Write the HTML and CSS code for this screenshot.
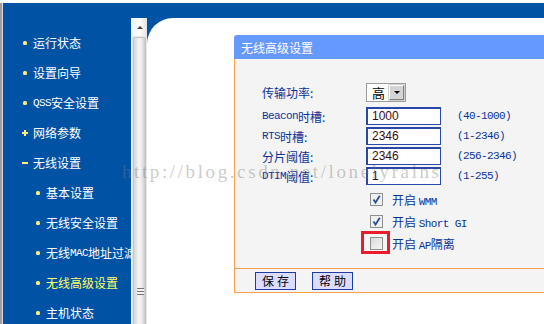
FILE: index.html
```html
<!DOCTYPE html>
<html lang="zh-CN">

<head>
    <meta charset="UTF-8">
    <meta name="viewport" content="width=device-width, initial-scale=1.0">
    <title>无线高级设置</title>
    <link rel="stylesheet" href="styles.css">
</head>

<body>
    <div class="screen">
        <div class="topbar"></div>
        <div class="main">
            <ul class="menu">
                <li class="item"><span class="mark dot"></span>运行状态</li>
                <li class="item"><span class="mark dot"></span>设置向导</li>
                <li class="item"><span class="mark dot"></span><span class="en">QSS</span>安全设置</li>
                <li class="item"><span class="mark plus"></span>网络参数</li>
                <li class="item"><span class="mark minus"></span>无线设置</li>
                <li class="item sub"><span class="mark dot"></span>基本设置</li>
                <li class="item sub"><span class="mark dot"></span>无线安全设置</li>
                <li class="item sub"><span class="mark dot"></span>无线<span class="en">MAC</span>地址过滤</li>
                <li class="item sub active"><span class="mark dot"></span>无线高级设置</li>
                <li class="item sub"><span class="mark dot"></span>主机状态</li>
            </ul>

            <div class="scroll">
                <div class="scroll-up"><span class="arrow"></span></div>
                <div class="thumb"><span class="grip"></span></div>
            </div>

            <div class="content">
                <div class="sheet">
                    <div class="panel">
                        <div class="panel-title">无线高级设置</div>
                        <div class="panel-body">
                            <div class="form">
                                <div class="label row-select">传输功率:</div>
                                <div class="row-select">
                                    <div class="select">
                                        <span class="select-value">高</span>
                                        <span class="select-btn"><span class="tri"></span></span>
                                    </div>
                                </div>
                                <div class="row-select"></div>

                                <div class="label row-input"><span class="en">Beacon</span>时槽:</div>
                                <div class="row-input"><div class="input">1000</div></div>
                                <div class="hint row-input">(40-1000)</div>

                                <div class="label row-input"><span class="en">RTS</span>时槽:</div>
                                <div class="row-input"><div class="input">2346</div></div>
                                <div class="hint row-input">(1-2346)</div>

                                <div class="label row-input">分片阈值:</div>
                                <div class="row-input"><div class="input">2346</div></div>
                                <div class="hint row-input">(256-2346)</div>

                                <div class="label row-input"><span class="en">DTIM</span>阈值:</div>
                                <div class="row-input"><div class="input">1</div></div>
                                <div class="hint row-input">(1-255)</div>
                            </div>

                            <div class="checks">
                                <div class="check-row">
                                    <span class="box">
                                        <svg width="13" height="13" viewBox="0 0 13 13">
                                            <rect x="0.5" y="0.5" width="12" height="12" fill="#eef0f2" stroke="#8e8f8f"/>
                                            <path d="M3.5 6.5 L5.5 9.5 L9.8 2.8" fill="none" stroke="#2f4f8f" stroke-width="1.8"/>
                                        </svg>
                                    </span>
                                    <span class="check-label">开启 <span class="en">WMM</span></span>
                                </div>
                                <div class="check-row">
                                    <span class="box">
                                        <svg width="13" height="13" viewBox="0 0 13 13">
                                            <rect x="0.5" y="0.5" width="12" height="12" fill="#eef0f2" stroke="#8e8f8f"/>
                                            <path d="M3.5 6.5 L5.5 9.5 L9.8 2.8" fill="none" stroke="#2f4f8f" stroke-width="1.8"/>
                                        </svg>
                                    </span>
                                    <span class="check-label">开启 <span class="en">Short GI</span></span>
                                </div>
                                <div class="check-row">
                                    <span class="box">
                                        <svg width="13" height="13" viewBox="0 0 13 13">
                                            <defs>
                                                <linearGradient id="off" x1="0" y1="0" x2="1" y2="1">
                                                    <stop offset="0" stop-color="#d8d8d8"/>
                                                    <stop offset="1" stop-color="#f8f8f8"/>
                                                </linearGradient>
                                            </defs>
                                            <rect x="0.5" y="0.5" width="12" height="12" fill="url(#off)" stroke="#8e8f8f"/>
                                        </svg>
                                        <span class="mark-red"></span>
                                    </span>
                                    <span class="check-label">开启 <span class="en">AP</span>隔离</span>
                                </div>
                            </div>
                        </div>
                        <div class="panel-foot">
                            <span class="btn">保存</span>
                            <span class="btn">帮助</span>
                        </div>
                    </div>
                </div>
            </div>
        </div>
        <div class="watermark">http://blog.csdn.net/lonelyrains</div>
    </div>
</body>

</html>
```

FILE: styles.css
```css
html,
body {
    margin: 0;
    padding: 0;
    background: #ffffff;
}

body {
    width: 544px;
    height: 324px;
    overflow: hidden;
    font-family: "Noto Sans CJK SC", sans-serif;
    font-size: 12px;
}

.screen {
    position: relative;
    display: flex;
    flex-direction: column;
    height: 321px;
    margin-top: 3px;
    border-left: 2px solid #9c9ca4;
    background: #0052a4;
    box-shadow: inset 1px 0 0 #dcdcdc;
}

.topbar {
    height: 15px;
    flex: none;
}

.main {
    display: flex;
    flex: 1;
    min-height: 0;
    padding-left: 1px;
}

/* left menu */
.menu {
    width: 128px;
    flex: none;
    margin: 0;
    padding: 10px 0 0 0;
    list-style: none;
    overflow: hidden;
    white-space: nowrap;
    color: #ffffff;
}

.item {
    display: flex;
    align-items: center;
    height: 30px;
    padding-left: 19px;
    line-height: 1;
}

.item.sub {
    padding-left: 32px;
}

.item.active {
    color: #ffff66;
}

.mark {
    position: relative;
    width: 6px;
    height: 6px;
    margin-right: 5px;
    flex: none;
}

.mark.dot::before {
    content: "";
    position: absolute;
    left: 1px;
    top: 1px;
    width: 4px;
    height: 4px;
    border-radius: 1.5px;
    background: #ffee77;
}

.mark.plus::before,
.mark.minus::before {
    content: "";
    position: absolute;
    left: 0;
    top: 2px;
    width: 6px;
    height: 2px;
    background: #ffee77;
}

.mark.plus::after {
    content: "";
    position: absolute;
    left: 2px;
    top: 0;
    width: 2px;
    height: 6px;
    background: #ffee77;
}

.en {
    font-family: "Liberation Mono", monospace;
    font-size: 11px;
    letter-spacing: -0.6px;
}

/* scrollbar */
.scroll {
    display: flex;
    flex-direction: column;
    width: 16px;
    flex: none;
    background: #e8e8e8;
    border-left: 1px solid #f4f4f4;
    box-sizing: border-box;
}

.scroll-up {
    display: flex;
    align-items: center;
    justify-content: center;
    height: 18px;
    background: linear-gradient(to right, #f2f2f2, #ffffff, #e2e2e2);
}

.arrow {
    width: 0;
    height: 0;
    border-left: 3px solid transparent;
    border-right: 3px solid transparent;
    border-bottom: 3px solid #404040;
}

.thumb {
    position: relative;
    flex: 1;
    margin: 1px 1px 0 1px;
    border: 1px solid #c4c4c4;
    border-bottom: none;
    border-radius: 2px 2px 0 0;
    background: linear-gradient(to right, #d6d6d6, #f6f6f6 45%, #e6e6e6 75%, #c8c8c8);
}

.grip {
    position: absolute;
    left: 3px;
    bottom: 29px;
    width: 7px;
    height: 7px;
    background: repeating-linear-gradient(to bottom, #777777 0, #777777 1px, #f2f2f2 1px, #f2f2f2 3px);
}

/* content area */
.content {
    flex: 1;
    min-width: 0;
    background: #0052a4;
}

.sheet {
    height: 100%;
    padding: 17px 0 0 87px;
    box-sizing: border-box;
    overflow: hidden;
    background: #ffffff;
    border-top-left-radius: 26px;
}

.panel {
    width: 420px;
    color: #0a3399;
}

.panel-title {
    height: 24px;
    padding-left: 7px;
    line-height: 25px;
    color: #ffffff;
    background: #6699ff;
    border-top-left-radius: 3px;
}

.panel-body {
    padding: 24px 0 14px 27px;
    background: #f4f4f4;
    border-left: 1px solid #f7a24b;
}

.form {
    display: grid;
    grid-template-columns: 104px 91px auto;
    align-items: center;
}

.row-select {
    height: 24px;
    display: flex;
    align-items: flex-start;
}

.label.row-select {
    align-items: center;
    height: 19px;
    margin-bottom: 5px;
}

.row-input {
    height: 20px;
    display: flex;
    align-items: flex-start;
}

.label.row-input,
.hint.row-input {
    align-items: center;
    height: 18px;
    margin-bottom: 2px;
}

.hint {
    font-family: "Liberation Mono", monospace;
    font-size: 11px;
    letter-spacing: -0.6px;
}

.select {
    display: flex;
    align-items: center;
    width: 40px;
    height: 19px;
    box-sizing: border-box;
    border: 1px solid #9c9c9c;
    background: #ffffff;
    box-shadow: inset 0 0 0 1px #ffffff;
}

.select-value {
    flex: 1;
    padding-left: 5px;
    font-size: 13px;
    color: #000000;
    line-height: 1;
}

.select-btn {
    display: flex;
    align-items: center;
    justify-content: center;
    width: 15px;
    height: 15px;
    margin-right: 1px;
    box-sizing: border-box;
    border: 1px solid #808080;
    border-top-color: #ffffff;
    border-left-color: #ffffff;
    background: #d4d4d4;
    box-shadow: 0 0 0 0.5px #a0a0a0;
}

.tri {
    width: 0;
    height: 0;
    border-left: 3px solid transparent;
    border-right: 3px solid transparent;
    border-top: 3px solid #000000;
}

.input {
    width: 75px;
    height: 18px;
    box-sizing: border-box;
    padding-left: 4px;
    border: 2px solid #2a48a8;
    border-width: 2px 1px 1px 2px;
    background: #ffffff;
    font-family: "Liberation Sans", Arial, sans-serif;
    font-size: 12px;
    line-height: 15px;
    color: #3a0a0a;
}

.checks {
    padding: 1px 0 0 106px;
}

.check-row {
    display: flex;
    align-items: center;
    height: 22px;
}

.box {
    position: relative;
    display: flex;
    width: 13px;
    height: 13px;
    margin-left: 2px;
    margin-right: 9px;
}

.mark-red {
    position: absolute;
    left: -9px;
    top: -6px;
    width: 29px;
    height: 23px;
    box-sizing: border-box;
    border: 3px solid #e81c2a;
}

.panel-foot {
    display: flex;
    gap: 16px;
    height: 25px;
    padding: 3px 0 0 20px;
    box-sizing: border-box;
    background: #f4f4f4;
    border-left: 1px solid #f7a24b;
    border-top: 1px solid #f7a24b;
    border-bottom: 1px solid #f7a24b;
}

.btn {
    display: flex;
    align-items: center;
    justify-content: center;
    width: 41px;
    height: 18px;
    box-sizing: border-box;
    border: 1px solid #1c3ca0;
    background: #dcdcff;
    color: #000000;
    letter-spacing: 3px;
    padding-left: 3px;
    line-height: 1;
}

/* csdn watermark */
.watermark {
    position: absolute;
    left: 120px;
    top: 158px;
    font-family: "Liberation Serif", serif;
    font-size: 19px;
    letter-spacing: 2.6px;
    color: rgba(120, 120, 120, 0.4);
    white-space: nowrap;
    pointer-events: none;
}
```
